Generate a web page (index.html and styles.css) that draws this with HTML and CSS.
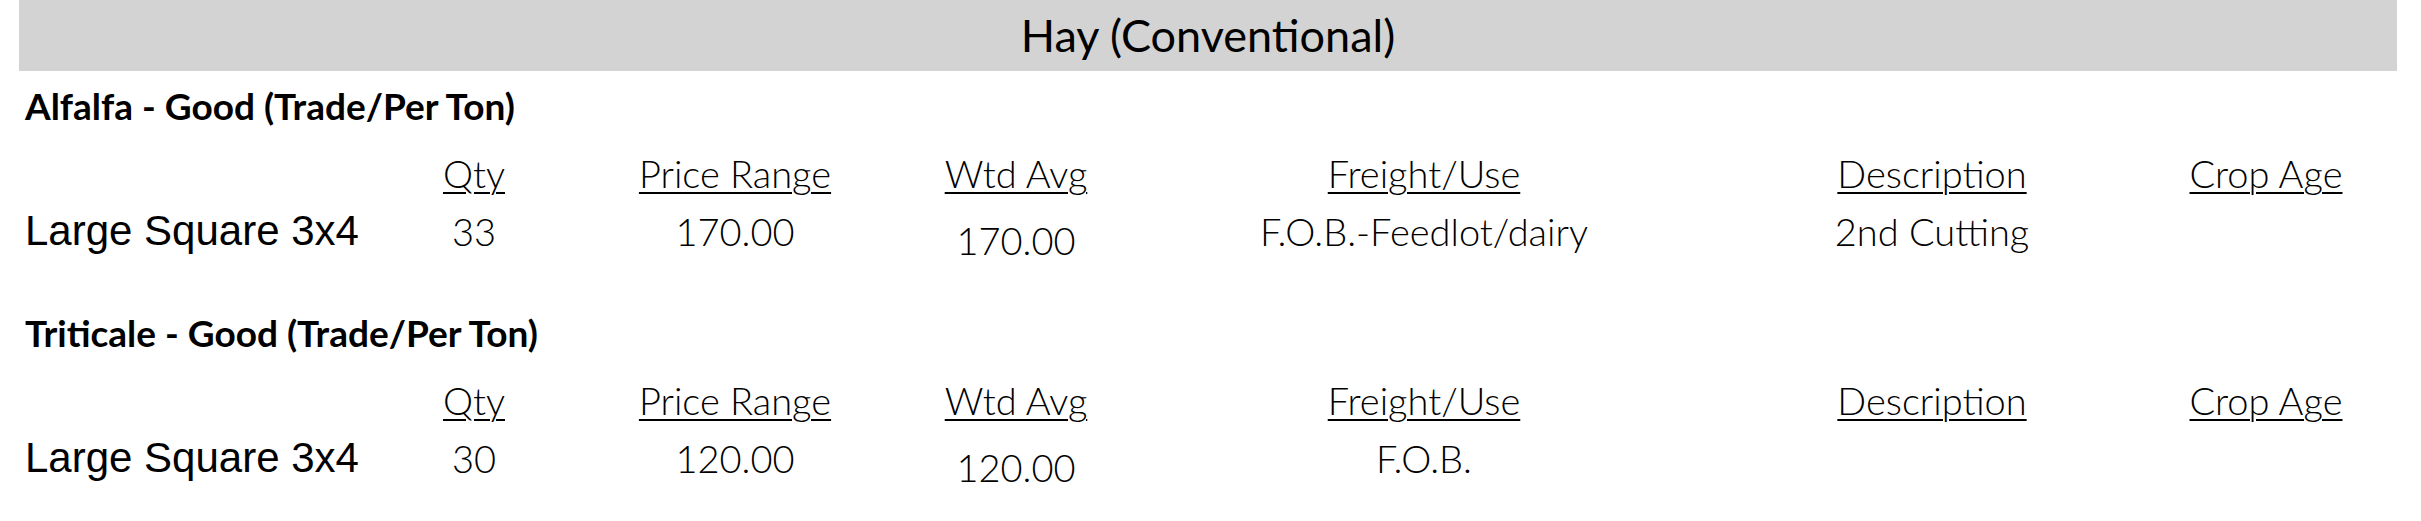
FILE: index.html
```html
<!DOCTYPE html>
<html lang="en">
<head>
<meta charset="utf-8">
<title>Hay (Conventional)</title>
<link rel="stylesheet" href="styles.css">
</head>
<body>
<div class="report">
  <div class="title-bar"><h1 class="title">Hay (Conventional)</h1></div>

  <section class="commodity">
    <h2 class="commodity-name">Alfalfa - Good (Trade/Per Ton)</h2>
    <div class="grid">
      <div class="cell label"></div>
      <div class="cell head"><span>Qty</span></div>
      <div class="cell head"><span>Price Range</span></div>
      <div class="cell head"><span>Wtd Avg</span></div>
      <div class="cell head"><span>Freight/Use</span></div>
      <div class="cell head"><span>Description</span></div>
      <div class="cell head"><span>Crop Age</span></div>

      <div class="cell label">Large Square 3x4</div>
      <div class="cell value">33</div>
      <div class="cell value">170.00</div>
      <div class="cell value avg">170.00</div>
      <div class="cell value">F.O.B.-Feedlot/dairy</div>
      <div class="cell value">2nd Cutting</div>
      <div class="cell value"></div>
    </div>
  </section>

  <section class="commodity">
    <h2 class="commodity-name">Triticale - Good (Trade/Per Ton)</h2>
    <div class="grid">
      <div class="cell label"></div>
      <div class="cell head"><span>Qty</span></div>
      <div class="cell head"><span>Price Range</span></div>
      <div class="cell head"><span>Wtd Avg</span></div>
      <div class="cell head"><span>Freight/Use</span></div>
      <div class="cell head"><span>Description</span></div>
      <div class="cell head"><span>Crop Age</span></div>

      <div class="cell label">Large Square 3x4</div>
      <div class="cell value">30</div>
      <div class="cell value">120.00</div>
      <div class="cell value avg">120.00</div>
      <div class="cell value">F.O.B.</div>
      <div class="cell value"></div>
      <div class="cell value"></div>
    </div>
  </section>
</div>
</body>
</html>
```

FILE: styles.css
```css
html, body {
  margin: 0;
  padding: 0;
  background: #ffffff;
}

body {
  font-family: Lato, "Liberation Sans", sans-serif;
  color: #000000;
}

.report {
  padding: 0 24px 0 19px;
}

.title-bar {
  background: #d3d3d3;
  height: 71px;
  display: flex;
  align-items: center;
  justify-content: center;
}

.title {
  margin: 0;
  font-weight: 400;
  font-size: 45px;
  line-height: 71px;
}

.commodity {
  padding: 11px 0 33px;
}

.commodity-name {
  margin: 0;
  padding-left: 6px;
  font-weight: 700;
  font-size: 37px;
  line-height: 48px;
}

.grid {
  display: grid;
  grid-template-columns: 379px 140px 382px 180px 636px 380px 288px;
  row-gap: 8px;
  margin: 18px 0 0 6px;
  align-items: start;
}

.cell {
  line-height: 50px;
  min-height: 50px;
  text-align: center;
  white-space: nowrap;
}

.head,
.value {
  font-weight: 300;
  font-size: 38px;
}

.head span {
  text-decoration: underline;
  text-decoration-thickness: 2px;
  text-underline-offset: 4px;
}

.label {
  text-align: left;
  font-family: "Liberation Sans", Arial, sans-serif;
  font-size: 42px;
}

.avg {
  padding-top: 9px;
}
```
